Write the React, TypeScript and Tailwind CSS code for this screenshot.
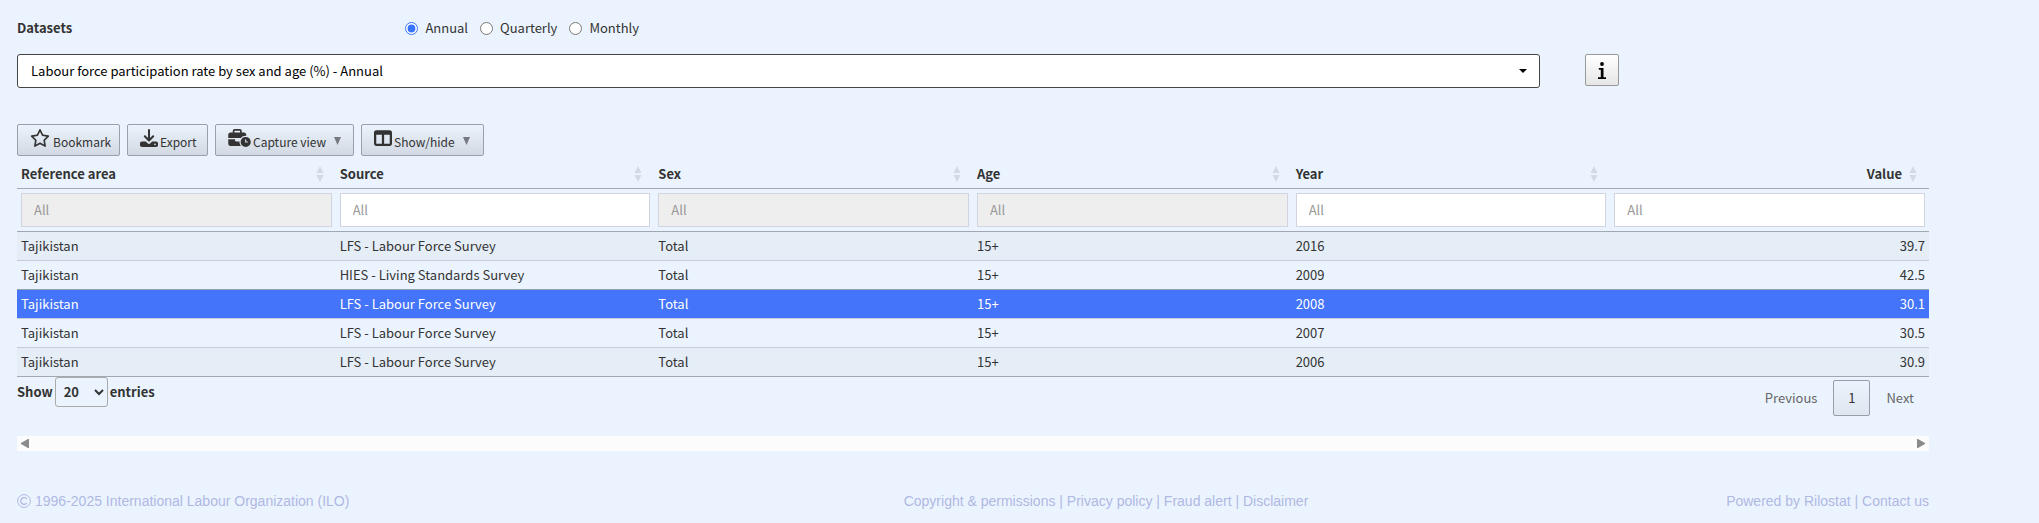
import React from "react";
import { FaBusinessTime, FaRegStar, FaTableColumns } from "react-icons/fa6";

const columns = ["Reference area", "Source", "Sex", "Age", "Year", "Value"];
const locked = [true, false, true, true, false, false];
const rows = [
  ["Tajikistan", "LFS - Labour Force Survey", "Total", "15+", "2016", "39.7"],
  ["Tajikistan", "HIES - Living Standards Survey", "Total", "15+", "2009", "42.5"],
  ["Tajikistan", "LFS - Labour Force Survey", "Total", "15+", "2008", "30.1"],
  ["Tajikistan", "LFS - Labour Force Survey", "Total", "15+", "2007", "30.5"],
  ["Tajikistan", "LFS - Labour Force Survey", "Total", "15+", "2006", "30.9"],
];
const rowStyles = [
  "bg-[#e5edf7]",
  "border-t border-[#c3cbd6]",
  "border-t border-[#939fb5] bg-[#4374f9] text-white",
  "border-t border-[#c3cbd6]",
  "border-t border-[#c3cbd6] bg-[#e5edf7]",
];

function SortArrows() {
  return (
    <svg viewBox="0 0 8 16" className="h-4 w-2 shrink-0 fill-[#d3dae4]" aria-hidden="true">
      <path d="M4 0 7.5 7H.5zM4 16 7.5 9H.5z" />
    </svg>
  );
}

function DownloadIcon() {
  return (
    <svg viewBox="0 0 18 18" className="mr-[2px] mb-1 size-[18px] shrink-0" aria-hidden="true">
      <path d="M9 1v10M4.800 7.300 9 11.500l4.200-4.200" fill="none" stroke="currentColor" strokeWidth="2" strokeLinecap="round" strokeLinejoin="round" />
      <path
        fillRule="evenodd"
        d="M2.500 12.500H5.800L7.600 14.200a2 2 0 0 0 2.800 0L12.200 12.500H15.500A2.500 2.500 0 0 1 15.500 18H2.500A2.500 2.500 0 0 1 2.500 12.500zM15 14.400a.9.900 0 1 0 0 1.800.9.900 0 0 0 0-1.800z"
        fill="currentColor"
      />
    </svg>
  );
}

function ToolButton({ icon, label, menu = false, className }: { icon: React.ReactNode; label: string; menu?: boolean; className: string }) {
  return (
    <button
      type="button"
      className={`flex h-8 items-center rounded-xs border border-[#9aa1ab] bg-linear-to-b from-[#ebf3fd] to-[#d2d9e2] text-[12px] leading-5 ${className}`}
    >
      {icon}
      <span className="pt-1">{label}</span>
      {menu && (
        <svg viewBox="0 0 7 8" className="mt-px ml-2 h-2 w-[7px] fill-[#757a80]" aria-hidden="true">
          <path d="M0 0h7L3.5 8z" />
        </svg>
      )}
    </button>
  );
}

export default function App() {
  return (
    <div className="min-h-screen bg-[#ebf4fe] pl-[17px] pr-[110px] font-['Noto_Sans_CJK_SC',sans-serif] text-[13px] leading-5 text-[#333]">
      <div className="flex items-center pt-[18px]">
        <label htmlFor="dataset" className="w-1/5 font-bold">Datasets</label>
        <fieldset className="flex gap-3 pl-[6px]">
          {["Annual", "Quarterly", "Monthly"].map((f, i) => (
            <label key={f} className="flex items-center gap-[7px]">
              <input type="radio" name="frequency" defaultChecked={i === 0} className="size-[13px] accent-[#3874ff]" />
              {f}
            </label>
          ))}
        </fieldset>
      </div>

      <div className="mt-4 flex items-start">
        <div className="relative mr-[45px] flex-1">
          <select
            id="dataset"
            className="block h-[34px] w-full appearance-none rounded-[3px] border border-[#444] bg-white px-[13px] text-[13px] text-black"
          >
            <option>Labour force participation rate by sex and age (%) - Annual</option>
          </select>
          <svg viewBox="0 0 8 4" className="pointer-events-none absolute right-[13px] top-[15px] h-1 w-2 fill-black" aria-hidden="true">
            <path d="M0 0h8L4 4z" />
          </svg>
        </div>
        <button type="button" aria-label="Dataset information" className="mr-[310px] flex h-8 w-[34px] items-center justify-center rounded-xs border border-[#999] bg-linear-to-b from-white to-[#e6e6e6]">
          <svg viewBox="0 0 8 17" className="h-[17px] w-2 fill-black" aria-hidden="true">
            <circle cx="4" cy="2" r="1.900" />
            <path d="M.8 6h4.700v9.300H8V17H0v-1.700h2.800V7.700H.8z" />
          </svg>
        </button>
      </div>

      <div className="mt-9 flex gap-[7px]">
        <ToolButton className="w-[103px] pl-3" icon={<FaRegStar className="mr-[3px] mb-1 size-5 shrink-0" />} label="Bookmark" />
        <ToolButton className="w-[81px] pl-3" icon={<DownloadIcon />} label="Export" />
        <ToolButton className="w-[139px] pl-3" icon={<FaBusinessTime className="mr-[2px] mb-1 h-[18px] w-[23px] shrink-0" />} label="Capture view" menu />
        <ToolButton className="w-[123px] pl-3" icon={<FaTableColumns className="mr-[2px] mb-1 size-[18px] shrink-0" />} label="Show/hide" menu />
      </div>

      <table className="w-full table-fixed border-collapse border-b border-[#a0a8b3]">
        <thead>
          <tr className="border-b border-[#a0a8b3]">
            {columns.map((c, i) => (
              <th key={c} className="h-8 pt-1 pr-3 pb-0 pl-1 text-left">
                <div className={`flex items-center ${i === 5 ? "justify-end gap-[7px]" : "justify-between"}`}>
                  {c}
                  <SortArrows />
                </div>
              </th>
            ))}
          </tr>
          <tr className="border-b border-[#a0a8b3]">
            {columns.map((c, i) => (
              <td key={c} className="px-1 py-1">
                <input
                  type="text"
                  placeholder="All"
                  aria-label={`Filter ${c}`}
                  disabled={locked[i]}
                  className="block h-[34px] w-full border border-[#d0d5e0] bg-white px-3 placeholder:text-[#999] disabled:bg-[#eee]"
                />
              </td>
            ))}
          </tr>
        </thead>
        <tbody>
          {rows.map((r, i) => (
            <tr key={r[4]} className={rowStyles[i]}>
              {r.map((v, j) => (
                <td key={columns[j]} className={j === 5 ? "px-1 py-1 text-right" : "px-1 py-1"}>{v}</td>
              ))}
            </tr>
          ))}
        </tbody>
      </table>

      <div className="flex items-start justify-between">
        <label className="flex items-center gap-[2px] font-bold">
          Show
          <span className="relative">
            <select className="h-[30px] w-[53px] appearance-none rounded-[3px] border border-[#aaa] bg-transparent pl-2 font-bold">
              <option>20</option>
            </select>
            <svg viewBox="0 0 10 7" className="pointer-events-none absolute right-1 top-3 h-[7px] w-[10px] fill-none stroke-[#333] stroke-2" aria-hidden="true">
              <path d="m1 1 4 4 4-4" />
            </svg>
          </span>
          entries
        </label>
        <nav aria-label="Table pages" className="mt-[3px] flex items-center">
          <button type="button" className="h-9 px-4 text-[#666]">Previous</button>
          <button type="button" className="h-9 w-[37px] rounded-xs border border-[#979ea8] bg-linear-to-b from-[#ebf3fd] to-[#dfe6ef]">1</button>
          <button type="button" className="h-9 pl-4 pr-[15px] text-[#666]">Next</button>
        </nav>
      </div>

      <div className="mt-5 flex h-[15px] items-center justify-between bg-[#fcfcfc] px-1" role="presentation">
        <svg viewBox="0 0 8 9" className="h-[9px] w-2 fill-[#8b8b8b]" aria-hidden="true"><path d="M8 0v9H7L0 5V4l7-4z" /></svg>
        <svg viewBox="0 0 8 9" className="h-[9px] w-2 fill-[#8b8b8b]" aria-hidden="true"><path d="M0 0v9h1l7-4V4L1 0z" /></svg>
      </div>

      <footer className="mt-10 flex items-center font-['Liberation_Sans',Arial,sans-serif] text-[14px] text-[#b0b8e4]">
        <span className="flex flex-[10] items-center gap-1">
          <svg viewBox="0 0 14 14" className="size-[14px] fill-none stroke-current" aria-hidden="true">
            <circle cx="7" cy="7" r="6.400" />
            <path d="M9.700 5A3.300 3.300 0 1 0 9.700 9" strokeWidth="1.300" />
          </svg>
          1996-2025 International Labour Organization (ILO)
        </span>
        <span>
          <a href="#copyright">Copyright &amp; permissions</a> | <a href="#privacy">Privacy policy</a> | <a href="#fraud">Fraud alert</a> | <a href="#disclaimer">Disclaimer</a>
        </span>
        <span className="flex-[7] text-right">
          <a href="#rilostat">Powered by Rilostat</a> | <a href="#contact">Contact us</a>
        </span>
      </footer>
    </div>
  );
}
